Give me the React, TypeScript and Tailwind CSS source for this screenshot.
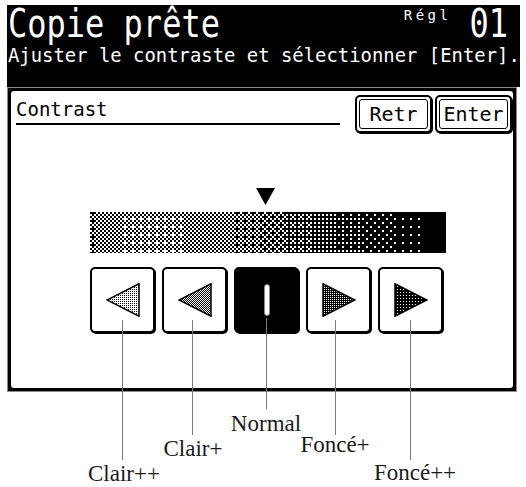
import { useMemo } from "react";

const BAYER = [
  [0, 8, 2, 10],
  [12, 4, 14, 6],
  [3, 11, 1, 9],
  [15, 7, 13, 5],
];

// darkness along the bar, [x px, level 0..1]
const STOPS: Array<[number, number]> = [
  [0, 0.55],
  [50, 0.42],
  [130, 0.5],
  [170, 0.6],
  [220, 0.72],
  [290, 0.88],
  [330, 0.96],
  [342, 1],
  [356, 1],
];

function level(x: number) {
  for (let i = 1; i < STOPS.length; i++) {
    const [x1, v1] = STOPS[i];
    const [x0, v0] = STOPS[i - 1];
    if (x <= x1) return v0 + ((v1 - v0) * (x - x0)) / (x1 - x0);
  }
  return 1;
}

function ditherPath(w: number, h: number, cell: number) {
  let d = "";
  for (let cy = 0; cy * cell < h; cy++) {
    for (let cx = 0; cx * cell < w; cx++) {
      const v = level(cx * cell + cell / 2);
      if (v > (BAYER[cy % 4][cx % 4] + 0.5) / 16) {
        d += `M${cx * cell} ${cy * cell}h${cell}v${cell}h-${cell}z`;
      }
    }
  }
  return d;
}

function GradientBar() {
  const d = useMemo(() => ditherPath(356, 41, 2), []);
  return (
    <svg width="356" height="41" viewBox="0 0 356 41" className="block">
      <rect width="356" height="41" fill="#fff" />
      <path d={d} fill="#000" shapeRendering="crispEdges" />
    </svg>
  );
}

function Patterns() {
  return (
    <svg width="0" height="0" className="absolute">
      <defs>
        <pattern id="p-light" width="2" height="2" patternUnits="userSpaceOnUse">
          <rect width="2" height="2" fill="#fff" />
          <rect width="1" height="1" fill="#000" />
        </pattern>
        <pattern id="p-mid" width="2" height="2" patternUnits="userSpaceOnUse">
          <rect width="2" height="2" fill="#fff" />
          <rect width="1" height="1" fill="#000" />
          <rect x="1" y="1" width="1" height="1" fill="#000" />
        </pattern>
        <pattern id="p-dark" width="2" height="2" patternUnits="userSpaceOnUse">
          <rect width="2" height="2" fill="#000" />
          <rect width="1" height="1" fill="#fff" />
        </pattern>
        <pattern id="p-black" width="3" height="3" patternUnits="userSpaceOnUse">
          <rect width="3" height="3" fill="#000" />
          <rect width="1" height="1" fill="#fff" />
        </pattern>
      </defs>
    </svg>
  );
}

function Arrow({ dir, fill }: { dir: "left" | "right"; fill: string }) {
  const pts = dir === "left" ? "33,0.75 33,33.25 1,17" : "1,0.75 1,33.25 33,17";
  return (
    <svg width="34" height="34" viewBox="0 0 34 34">
      <polygon points={pts} fill={`url(#${fill})`} stroke="#000" strokeWidth="1.5" strokeLinejoin="miter" />
    </svg>
  );
}

function StepButton({ children, active }: { children: React.ReactNode; active?: boolean }) {
  return (
    <div
      className={
        active
          ? "w-[65px] h-[66px] rounded-[5px] border-2 border-black bg-black shadow-[1px_1px_0_0_#000] flex items-center justify-center"
          : "w-[65px] h-[66px] rounded-[5px] border-2 border-black bg-white shadow-[1px_1px_0_0_#000] flex items-center justify-center"
      }
    >
      {children}
    </div>
  );
}

function FrameButton({ label }: { label: string }) {
  return (
    <div className="w-[77px] h-[38px] rounded-[5px] border-2 border-black p-[2px] shadow-[1px_1px_0_0_#000] bg-white">
      <div className="h-full rounded-[3px] border-[1.5px] border-black flex items-center justify-center text-[20px] leading-none">
        {label}
      </div>
    </div>
  );
}

const callouts = [
  { x: 122, top: 320, bottom: 460, label: "Clair++", textTop: 462, textX: 124 },
  { x: 192, top: 320, bottom: 435, label: "Clair+", textTop: 437, textX: 193 },
  { x: 266, top: 318, bottom: 409, label: "Normal", textTop: 412, textX: 266 },
  { x: 335, top: 320, bottom: 435, label: "Foncé+", textTop: 433, textX: 335 },
  { x: 410, top: 320, bottom: 460, label: "Foncé++", textTop: 461, textX: 415 },
];

export default function App() {
  return (
    <div className="relative w-[526px] h-[487px] overflow-hidden bg-white pt-[5px] pl-[7px] font-['DejaVu_Sans_Mono',monospace]">
      <Patterns />
      <div className="w-[513px]">
        {/* status header */}
        <div className="h-[82px] bg-black pl-[1px] pr-[12px] text-white">
          <div className="flex items-start justify-between">
            <div className="text-[32px] leading-none scale-y-[1.2] origin-top">Copie prête</div>
            <div className="flex items-start">
              <span className="mt-[3px] mr-[18px] text-[14px] leading-none tracking-[3.5px]">Régl</span>
              <span className="text-[32px] leading-none scale-y-[1.2] origin-top">01</span>
            </div>
          </div>
          <div className="mt-[8.5px] text-[18.9px] leading-none whitespace-nowrap">
            Ajuster le contraste et sélectionner [Enter].
          </div>
        </div>

        {/* panel */}
        <div className="w-[510px] h-[305px] border border-[#8a8a8a] bg-black p-[3px]">
          <div className="h-full rounded-[3px] bg-white flex flex-col text-black">
            <div className="flex items-start pt-[4px] pr-[1px]">
              <div className="ml-[5px] w-[324px] h-[30px] border-b-2 border-black flex items-center text-[19px] leading-none">
                Contrast
              </div>
              <div className="ml-auto flex gap-[3px]">
                <FrameButton label="Retr" />
                <FrameButton label="Enter" />
              </div>
            </div>

            <div className="ml-[245px] mt-[55px] w-[19px] h-[17px]">
              <svg width="19" height="17" viewBox="0 0 19 17">
                <polygon points="0,0 19,0 9.5,17" fill="#000" />
              </svg>
            </div>

            <div className="ml-[79px] mt-[7px]">
              <GradientBar />
            </div>

            <div className="ml-[79px] mt-[14px] flex gap-[7px]">
              <StepButton>
                <Arrow dir="left" fill="p-light" />
              </StepButton>
              <StepButton>
                <Arrow dir="left" fill="p-mid" />
              </StepButton>
              <StepButton active>
                <div className="w-[6px] h-[32px] rounded-[3px] bg-white border border-[#888]" />
              </StepButton>
              <StepButton>
                <Arrow dir="right" fill="p-dark" />
              </StepButton>
              <StepButton>
                <Arrow dir="right" fill="p-black" />
              </StepButton>
            </div>
          </div>
        </div>
      </div>

      {/* callouts */}
      {callouts.map((c) => (
        <div key={c.label}>
          <div
            className="absolute w-px bg-[#7a7a7a]"
            style={{ left: c.x, top: c.top, height: c.bottom - c.top }}
          />
          <div
            className="absolute -translate-x-1/2 whitespace-nowrap font-['Liberation_Serif',serif] text-[23px] leading-none text-[#1a1a1a]"
            style={{ left: c.textX, top: c.textTop }}
          >
            {c.label}
          </div>
        </div>
      ))}
    </div>
  );
}
